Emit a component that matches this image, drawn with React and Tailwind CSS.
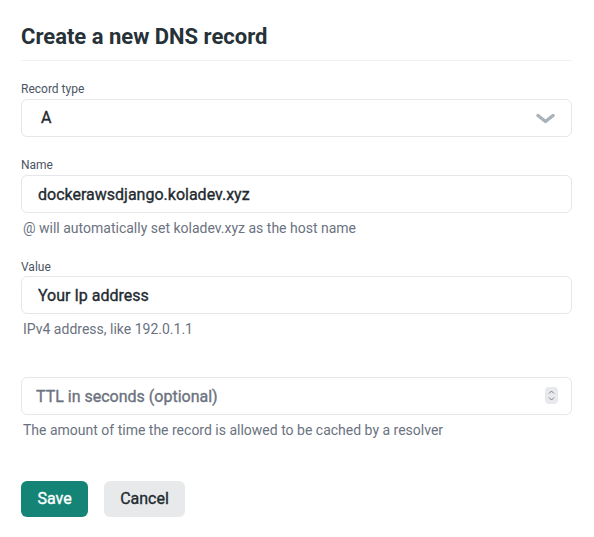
import { useState } from "react";

const Label = ({ children }) => (
  <label className="block h-4 text-xs leading-4 text-[#4b5563]">{children}</label>
);

const Help = ({ children }) => (
  <p className="mt-[5px] pl-[2px] text-sm leading-5 text-[#6b7280]">{children}</p>
);

// Roboto has no 500 face here, so a thin stroke stands in for "medium"
const medium = "font-normal [-webkit-text-stroke:0.35px]";

const inputCls = `block h-[38px] w-full rounded-md border border-[#e5e7eb] bg-white px-4 text-base ${medium} text-[#1f2b31] outline-none placeholder:text-[#6b7280]`;

const App = () => {
  const [name, setName] = useState("dockerawsdjango.koladev.xyz");
  const [value, setValue] = useState("Your Ip address");
  const [ttl, setTtl] = useState("");

  return (
    <div className="min-h-screen bg-white pl-[21px] pr-[22px] pt-[23px] font-['Roboto',sans-serif]">
      <h2 className="border-b border-[#f1f2f4] pb-[9px] text-[22px] font-bold leading-7 text-[#263238]">
        Create a new DNS record
      </h2>

      <div className="mt-[20px]">
        <Label>Record type</Label>
        <div className="relative mt-[2px] flex h-[38px] items-center rounded-md border border-[#e5e7eb] pl-[19px] pr-4">
          <span className={`text-base ${medium} text-[#1f2b31]`}>A</span>
          <svg
            className="ml-auto"
            width="19"
            height="11"
            viewBox="0 0 19 11"
            fill="none"
          >
            <path d="M2 2.5l7.5 6 7.5-6" stroke="#aab2b9" strokeWidth="3.4" strokeLinecap="round" strokeLinejoin="round" />
          </svg>
        </div>
      </div>

      <div className="mt-5">
        <Label>Name</Label>
        <input
          className={`mt-[2px] ${inputCls}`}
          value={name}
          onChange={(e) => setName(e.target.value)}
        />
        <Help>@ will automatically set koladev.xyz as the host name</Help>
      </div>

      <div className="mt-[21px]">
        <Label>Value</Label>
        <input
          className={`mt-[1px] ${inputCls}`}
          value={value}
          onChange={(e) => setValue(e.target.value)}
        />
        <Help>IPv4 address, like 192.0.1.1</Help>
      </div>

      <div className="mt-5">
        <Label></Label>
        <div className="relative mt-[2px]">
          <input
            className={`${inputCls} pl-[14px]`}
            placeholder="TTL in seconds (optional)"
            value={ttl}
            onChange={(e) => setTtl(e.target.value)}
          />
          <div className="absolute right-[14px] top-[10px] flex h-[17px] w-[13px] flex-col items-center justify-center gap-[3px] rounded-sm bg-[#e8e9ec]">
            <svg width="7" height="4" viewBox="0 0 7 4" fill="none">
              <path d="M1 3.5L3.5 1 6 3.5" stroke="#7b818a" strokeWidth="1" />
            </svg>
            <svg width="7" height="4" viewBox="0 0 7 4" fill="none">
              <path d="M1 0.5L3.5 3 6 0.5" stroke="#7b818a" strokeWidth="1" />
            </svg>
          </div>
        </div>
        <Help>The amount of time the record is allowed to be cached by a resolver</Help>
      </div>

      <div className="mt-[41px] flex gap-4">
        <button className={`h-9 w-[67px] rounded-md bg-[#138475] text-base ${medium} text-white`}>
          Save
        </button>
        <button className={`h-9 w-[81px] rounded-md bg-[#e8e9eb] text-base ${medium} text-[#1f2b31]`}>
          Cancel
        </button>
      </div>
    </div>
  );
};

export default App;
